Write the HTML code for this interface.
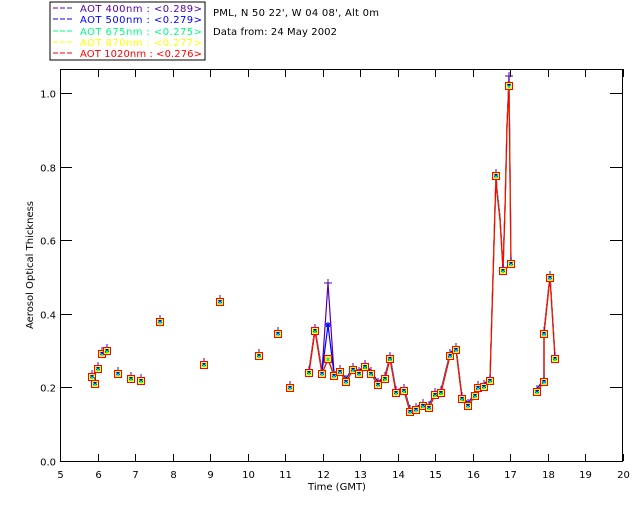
<!DOCTYPE html>
<html><head><meta charset="utf-8"><style>
html,body{margin:0;padding:0;background:#fff;width:640px;height:512px;overflow:hidden}
svg{display:block}
text{font-family:"DejaVu Sans","Liberation Sans",sans-serif;font-size:10px}
</style></head><body>
<svg id="s" width="640" height="512" xmlns="http://www.w3.org/2000/svg">
<rect x="50" y="2" width="155" height="58" fill="#fff" stroke="#000" stroke-width="1"/>
<g font-size="10">
<line x1="53" y1="8" x2="73" y2="8" stroke="#5500aa" stroke-dasharray="5,2"/><text x="80" y="12" fill="#5500aa" textLength="122" lengthAdjust="spacing">AOT  400nm : &lt;0.289&gt;</text>
<line x1="53" y1="19" x2="73" y2="19" stroke="#0000ff" stroke-dasharray="5,2"/><text x="80" y="23" fill="#0000ff" textLength="122" lengthAdjust="spacing">AOT  500nm : &lt;0.279&gt;</text>
<line x1="53" y1="31" x2="73" y2="31" stroke="#00ff80" stroke-dasharray="5,2"/><text x="80" y="35" fill="#00ff80" textLength="122" lengthAdjust="spacing">AOT  675nm : &lt;0.275&gt;</text>
<line x1="53" y1="42" x2="73" y2="42" stroke="#ffff00" stroke-dasharray="5,2"/><text x="80" y="46" fill="#ffff00" textLength="122" lengthAdjust="spacing">AOT  870nm : &lt;0.277&gt;</text>
<line x1="53" y1="53" x2="73" y2="53" stroke="#ff0000" stroke-dasharray="5,2"/><text x="80" y="57" fill="#ff0000" textLength="122" lengthAdjust="spacing">AOT 1020nm : &lt;0.276&gt;</text>
</g>
<text x="213" y="16" fill="#000" textLength="166" lengthAdjust="spacing">PML, N 50 22', W 04 08', Alt 0m</text>
<text x="213" y="35" fill="#000" textLength="124" lengthAdjust="spacing">Data from: 24 May 2002</text>
<rect x="60.5" y="69.5" width="562" height="392" fill="none" stroke="#000"/>
<g id="ax" stroke="#000"></g>
<g id="lbl" fill="#000"></g>
<text x="337" y="490" text-anchor="middle">Time (GMT)</text>
<text transform="translate(33,265) rotate(-90)" text-anchor="middle">Aerosol Optical Thickness</text>
<g id="d"></g>
</svg>
<script>
var NS="http://www.w3.org/2000/svg";
function el(p,t,a,txt){var e=document.createElementNS(NS,t);for(var k in a)e.setAttribute(k,a[k]);if(txt!=null)e.textContent=txt;p.appendChild(e);return e;}
var ax=document.getElementById('ax'),lb=document.getElementById('lbl'),d=document.getElementById('d');
for(var h=5;h<=20;h++){var x=60+(h-5)*37.5;x=Math.round(x)+0.5;
 el(ax,'line',{x1:x,y1:461,x2:x,y2:454});el(ax,'line',{x1:x,y1:69,x2:x,y2:77});
 el(lb,'text',{x:x,y:478,'text-anchor':'middle'},h);}
for(var i=0;i<=5;i++){var y=Math.round(461-i*0.2*367.7)+0.5;
 el(ax,'line',{x1:60,y1:y,x2:72,y2:y});el(ax,'line',{x1:622,y1:y,x2:610,y2:y});
 el(lb,'text',{x:56,y:y+4,'text-anchor':'end'},(i*0.2).toFixed(1));}
var iso=[[92,377],[95,384],[98,369],[102,354],[107,351],[118,374],[131,379],[141,381],[160,322],[204,365],[220,302],[259,356],[278,334],[290,388]];
var ln=[[309,373],[315,331],[322,374],[328,359],[334,376],[340,372],[346,382],[353,370],[359,374],[365,367],[371,374],[378,385],[385,379],[390,359],[396,393],[404,391],[410,412],[416,410],[423,406],[429,408],[435,395],[441,393],[450,356],[456,350],[462,399],[468,406],[475,396],[478,388],[484,387],[490,381],[496,176],[497,193],[500,220],[502,253],[503,271],[505,210],[507,127],[509,86],[511,264]];
var ln2=[[537,392],[541,386],[544,382],[544,334],[550,278],[555,359]];
var noMark={"497":1,"500":1,"502":1,"505":1,"507":1,"541":1};
var cols=['#5500aa','#0000ff','#00ff80','#ffff00','#ff0000'];
var off=[-3,-2,-1,0,0];
function poly(pts,c,o,spec){var s=pts.map(function(p,i){var y=p[1]+o;if(spec&&spec[i]!=null)y=spec[i];return p[0]+','+y}).join(' ');
 el(d,'polyline',{points:s,fill:'none',stroke:c,'stroke-width':1.2});}
var sp0={3:283,37:76},sp1={3:325,37:84};
[ln,ln2].forEach(function(L){for(var k=0;k<5;k++){var sp=null;if(L===ln){sp=k==0?sp0:(k==1?sp1:null);}poly(L,cols[k],off[k],sp);}});
var all=iso.concat(ln).concat(ln2);
all.forEach(function(p,i){var x=p[0],y=p[1];
 if(noMark[x])return;
 var py=y-3,by=y-1;if(x==328&&y==359){py=283;by=325;}if(x==509){py=76;by=84;}
 el(d,'path',{d:'M'+(x-4)+' '+py+'h8M'+x+' '+(py-4)+'v8',stroke:cols[0],fill:'none'});
 el(d,'path',{d:'M'+(x-3)+' '+by+'h6M'+x+' '+(by-3)+'v6M'+(x-2)+' '+(by-2)+'l4 4M'+(x+2)+' '+(by-2)+'l-4 4',stroke:cols[1],fill:'none'});
 el(d,'path',{d:'M'+(x-2)+' '+(y-1)+'l4 4M'+(x+2)+' '+(y-1)+'l-4 4',stroke:cols[2],fill:'none'});
 el(d,'rect',{x:x-2.5,y:y-2.5,width:5,height:5,fill:'none',stroke:cols[3]});
 el(d,'rect',{x:x-3.5,y:y-3.5,width:7,height:7,fill:'none',stroke:cols[4]});
});
</script>
</body></html>
